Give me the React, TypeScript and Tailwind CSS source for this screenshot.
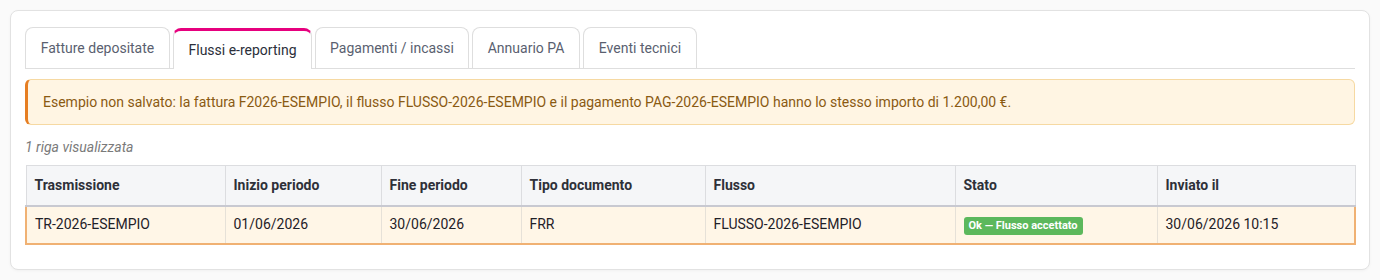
import React from "react";

const tabs = [
  { label: "Fatture depositate", w: "w-[145px]" },
  { label: "Flussi e-reporting", w: "w-[139px]", active: true },
  { label: "Pagamenti / incassi", w: "w-[154px]" },
  { label: "Annuario PA", w: "w-[108px]" },
  { label: "Eventi tecnici", w: "w-[114px]" },
];

const columns = [
  { label: "Trasmissione", w: "w-[199px]" },
  { label: "Inizio periodo", w: "w-[156px]" },
  { label: "Fine periodo", w: "w-[140px]" },
  { label: "Tipo documento", w: "w-[184px]" },
  { label: "Flusso", w: "w-[250px]" },
  { label: "Stato", w: "w-[202px]" },
  { label: "Inviato il", w: "w-[198px]" },
];

export default function App() {
  return (
    <div className="min-h-screen bg-[#fafafa] p-[10px] font-['Roboto',sans-serif] text-[14px]">
      <div className="h-[260px] rounded-[8px] border border-[#e2e2e2] bg-white px-[14px] pt-[16px] shadow-[0_1px_3px_rgba(0,0,0,0.04)]">
        {/* tabs */}
        <div className="flex h-[42px] items-end gap-[3px] border-b border-[#dedede]">
          {tabs.map((t) =>
            t.active ? (
              <div
                key={t.label}
                className={`${t.w} -mb-px flex h-[41px] items-center justify-center rounded-t-[8px] border border-b-0 border-[#dedede] border-t-[3px] border-t-[#e6007e] bg-white text-[#2b2f3a]`}
              >
                {t.label}
              </div>
            ) : (
              <div
                key={t.label}
                className={`${t.w} flex h-[41px] items-center justify-center rounded-t-[8px] border border-b-0 border-[#dedede] text-[#5a5f70]`}
              >
                {t.label}
              </div>
            )
          )}
        </div>

        {/* alert */}
        <div className="mt-[10px] flex h-[46px] items-center rounded-[6px] border border-l-[3px] border-[#f6d9a2] border-l-[#e67e22] bg-[#fff5e3] pl-[15px] text-[#8a5a12]">
          Esempio non salvato: la fattura F2026-ESEMPIO, il flusso FLUSSO-2026-ESEMPIO e il pagamento PAG-2026-ESEMPIO hanno lo stesso importo di 1.200,00 €.
        </div>

        <p className="mt-[12px] text-[14px] leading-[20px] italic text-[#7a7a7a]">1 riga visualizzata</p>

        {/* table */}
        <table className="mt-[8px] w-[1329px] table-fixed border-collapse">
          <thead>
            <tr className="h-[40px] bg-[#f5f6f8]">
              {columns.map((c) => (
                <th
                  key={c.label}
                  className={`${c.w} border border-b-2 border-[#dcdde0] border-b-[#c8c9d1] px-[8px] text-left font-bold text-[#2e3038]`}
                >
                  {c.label}
                </th>
              ))}
            </tr>
          </thead>
          <tbody>
            <tr className="h-[38px] bg-[#fff6e7] text-[#1f2128]">
              <td className="border border-[#e6e1d8] border-l-2 border-l-[#f0b173] border-y-2 border-y-[#f0b173] px-[8px]">TR-2026-ESEMPIO</td>
              <td className="border border-[#e6e1d8] border-y-2 border-y-[#f0b173] px-[8px]">01/06/2026</td>
              <td className="border border-[#e6e1d8] border-y-2 border-y-[#f0b173] px-[8px]">30/06/2026</td>
              <td className="border border-[#e6e1d8] border-y-2 border-y-[#f0b173] px-[8px]">FRR</td>
              <td className="border border-[#e6e1d8] border-y-2 border-y-[#f0b173] px-[8px]">FLUSSO-2026-ESEMPIO</td>
              <td className="border border-[#e6e1d8] border-y-2 border-y-[#f0b173] px-[8px]">
                <span className="inline-block rounded-[3px] bg-[#5cb85c] px-[5px] py-[2px] text-[11px] leading-[14px] font-bold text-white">
                  Ok — Flusso accettato
                </span>
              </td>
              <td className="border border-[#e6e1d8] border-r-2 border-r-[#f0b173] border-y-2 border-y-[#f0b173] px-[8px]">30/06/2026 10:15</td>
            </tr>
          </tbody>
        </table>
      </div>
    </div>
  );
}
